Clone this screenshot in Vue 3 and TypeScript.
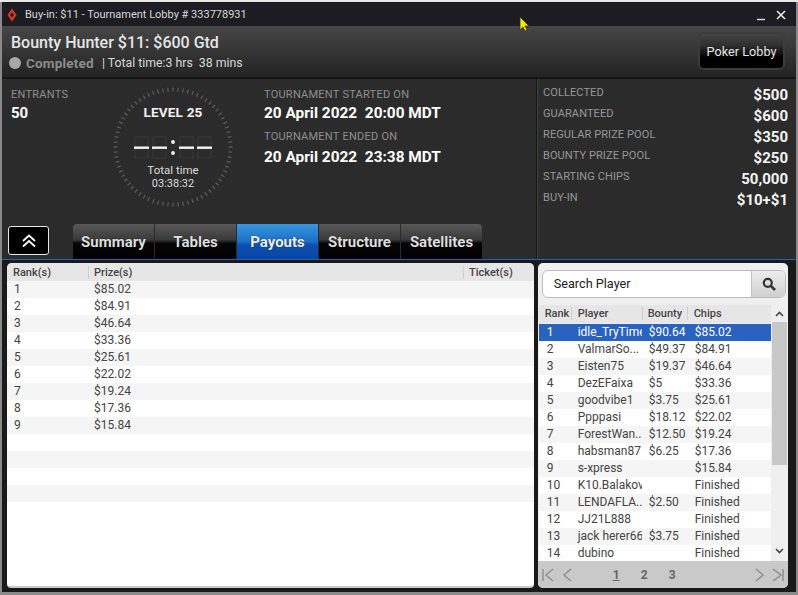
<script setup lang="ts">
const ticks = Array.from({ length: 72 }, (_, i) => {
  const a = (i * 5 * Math.PI) / 180
  const s = Math.sin(a), c = Math.cos(a)
  return { x1: 61 + 55.5 * s, y1: 61 - 55.5 * c, x2: 61 + 59.5 * s, y2: 61 - 59.5 * c }
})
const stats = [
  ['COLLECTED', '$500'], ['GUARANTEED', '$600'], ['REGULAR PRIZE POOL', '$350'],
  ['BOUNTY PRIZE POOL', '$250'], ['STARTING CHIPS', '50,000'], ['BUY-IN', '$10+$1'],
]
const tabs = ['Summary', 'Tables', 'Payouts', 'Structure', 'Satellites']
const prizes = ['$85.02', '$84.91', '$46.64', '$33.36', '$25.61', '$22.02', '$19.24', '$17.36', '$15.84', '', '', '', '']
const players = [
  ['1', 'idle_TryTime', '$90.64', '$85.02'], ['2', 'ValmarSo...', '$49.37', '$84.91'],
  ['3', 'Eisten75', '$19.37', '$46.64'], ['4', 'DezEFaixa', '$5', '$33.36'],
  ['5', 'goodvibe1', '$3.75', '$25.61'], ['6', 'Ppppasi', '$18.12', '$22.02'],
  ['7', 'ForestWan...', '$12.50', '$19.24'], ['8', 'habsman87', '$6.25', '$17.36'],
  ['9', 's-xpress', '', '$15.84'], ['10', 'K10.Balakov', '', 'Finished'],
  ['11', 'LENDAFLA...', '$2.50', 'Finished'], ['12', 'JJ21L888', '', 'Finished'],
  ['13', 'jack herer66', '$3.75', 'Finished'], ['14', 'dubino', '', 'Finished'],
]
// Seven-segment cell outlines for the unlit digits of the clock
const digitX = [0, 18, 45, 63]
</script>

<template>
  <div class="window">
    <div class="titlebar">
      <svg class="logo" width="10" height="14" viewBox="0 0 10 14">
        <path d="M5 0.5 L9.5 7 L5 13.5 L0.5 7 Z" fill="#d8391f" />
        <path d="M5 4.5 L7 7 L5 9.5 L3 7 Z" fill="#1c1c22" />
      </svg>
      <span class="title-text">Buy-in: $11 - Tournament Lobby # 333778931</span>
      <span class="spacer"></span>
      <svg class="winctl" width="36" height="12" viewBox="0 0 36 12">
        <path d="M0 10.5 H8" stroke="#ddd" stroke-width="1.4" />
        <path d="M20 2 L28 10 M28 2 L20 10" stroke="#e8e8e8" stroke-width="1.6" />
      </svg>
    </div>

    <div class="header">
      <div class="head-info">
        <div class="tname">Bounty Hunter $11: $600 Gtd</div>
        <div class="status">
          <span class="dot"></span>
          <span class="completed">Completed</span>
          <span class="total">| Total time:3 hrs&nbsp; 38 mins</span>
        </div>
      </div>
      <div class="lobby-wrap"><div class="lobby">Poker Lobby</div></div>
    </div>

    <div class="main">
      <div class="main-left">
        <div class="info-row">
          <div class="entrants">
            <div class="label">ENTRANTS</div>
            <div class="value">50</div>
          </div>
          <div class="clock">
            <svg class="ring" width="122" height="122" viewBox="0 0 122 122">
              <line v-for="(t, i) in ticks" :key="i" :x1="t.x1" :y1="t.y1" :x2="t.x2" :y2="t.y2" stroke="#5a5a5a" stroke-width="1.3" />
            </svg>
            <div class="level">LEVEL 25</div>
            <svg class="digits" width="78" height="24" viewBox="0 0 78 24">
              <g v-for="x in digitX" :key="x" fill="none" stroke="#363636" stroke-width="1.4">
                <rect :x="x + 1" y="1" width="13" height="10.5" />
                <rect :x="x + 1" y="11.5" width="13" height="10.5" />
              </g>
              <rect v-for="x in digitX" :key="'d' + x" :x="x" y="10.5" width="15" height="2.4" fill="#f2f2f2" />
              <circle cx="39" cy="6" r="1.9" fill="#f2f2f2" />
              <circle cx="39" cy="17" r="1.9" fill="#f2f2f2" />
            </svg>
            <div class="ttime">Total time</div>
            <div class="ttime">03:38:32</div>
          </div>
          <div class="dates">
            <div class="label">TOURNAMENT STARTED ON</div>
            <div class="value date">20 April 2022&nbsp; 20:00 MDT</div>
            <div class="label second">TOURNAMENT ENDED ON</div>
            <div class="value date last">20 April 2022&nbsp; 23:38 MDT</div>
          </div>
        </div>
        <div class="tab-row">
          <div class="collapse">
            <svg width="14" height="14" viewBox="0 0 14 14" fill="none" stroke="#fff" stroke-width="1.7">
              <path d="M1 7 L7 1.5 L13 7" />
              <path d="M1 12.5 L7 7 L13 12.5" />
            </svg>
          </div>
          <div class="tabs">
            <div v-for="t in tabs" :key="t" class="tab" :class="{ active: t === 'Payouts' }">{{ t }}</div>
          </div>
        </div>
      </div>
      <div class="main-right">
        <div v-for="s in stats" :key="s[0]" class="stat">
          <span class="stat-label">{{ s[0] }}</span>
          <span class="stat-value">{{ s[1] }}</span>
        </div>
      </div>
    </div>

    <div class="bottom">
      <div class="payouts">
        <div class="p-head">
          <div class="pc1">Rank(s)</div>
          <div class="pc2">Prize(s)</div>
          <div class="pc3">Ticket(s)</div>
        </div>
        <div v-for="(p, i) in prizes" :key="i" class="p-row" :class="{ alt: i % 2 === 0 }">
          <div class="pc1 cell">{{ p ? i + 1 : '' }}</div>
          <div class="pc2 cell">{{ p }}</div>
        </div>
      </div>

      <div class="side">
        <div class="search">
          <div class="search-input">Search Player</div>
          <div class="search-btn">
            <svg width="14" height="14" viewBox="0 0 14 14" fill="none" stroke="#333" stroke-width="2.2">
              <circle cx="5.8" cy="5.8" r="4" />
              <path d="M8.8 8.8 L13 13" stroke-width="2.6" />
            </svg>
          </div>
        </div>
        <div class="list">
          <div class="list-main">
            <div class="l-head">
              <div class="c1">Rank</div>
              <div class="c2">Player</div>
              <div class="c3">Bounty</div>
              <div class="c4">Chips</div>
            </div>
            <div v-for="(r, i) in players" :key="r[0]" class="l-row" :class="{ sel: i === 0, alt: i > 0 && i % 2 === 0 }">
              <div class="c1 lc">{{ r[0] }}</div>
              <div class="c2 lc">{{ r[1] }}</div>
              <div class="c3 lc">{{ r[2] }}</div>
              <div class="c4 lc">{{ r[3] }}</div>
            </div>
          </div>
          <div class="scroll">
            <svg class="arrow" width="9" height="6" viewBox="0 0 9 6" fill="none" stroke="#444" stroke-width="1.6"><path d="M1 5 L4.5 1.5 L8 5" /></svg>
            <div class="thumb"></div>
            <svg class="arrow" width="9" height="6" viewBox="0 0 9 6" fill="none" stroke="#444" stroke-width="1.6"><path d="M1 1 L4.5 4.5 L8 1" /></svg>
          </div>
        </div>
        <div class="pager">
          <svg width="36" height="14" viewBox="0 0 36 14" fill="none" stroke="#8f8f8f" stroke-width="1.5">
            <path d="M1 1 V13 M11 1 L4 7 L11 13 M29 1 L22 7 L29 13" />
          </svg>
          <div class="pages">
            <span class="pg cur">1</span><span class="pg">2</span><span class="pg">3</span>
          </div>
          <svg width="36" height="14" viewBox="0 0 36 14" fill="none" stroke="#8f8f8f" stroke-width="1.5">
            <path d="M7 1 L14 7 L7 13 M24 1 L32 7 L24 13 M34 1 V13" />
          </svg>
        </div>
      </div>
    </div>

    <svg class="cursor" width="11" height="16" viewBox="0 0 11 16">
      <path d="M1 1 V14 L4 11 L6 15 L8 14 L6 10 L10 10 Z" fill="#f4e800" stroke="#333" stroke-width="0.8" />
    </svg>
  </div>
</template>

<style>
html, body { margin: 0; background: #8a8a8a; }
</style>

<style scoped>
.window {
  position: relative; width: 798px; height: 595px; box-sizing: border-box;
  padding: 3px 2px 5px 2px; background: #1a1a1a;
  overflow: hidden;
  font-family: Roboto, "Liberation Sans", sans-serif;
  box-shadow: inset 0 2px 0 #e8e8e8, inset 2px 0 0 #8a8a8a, inset -2px 0 0 #8a8a8a, inset 0 -3px 0 #8a8a8a;
}
.titlebar {
  height: 23px; background: #1c1c22; display: flex; align-items: center; padding: 0 3px 0 5px;
  color: #d8d8d8; font-size: 11px;
}
.logo { margin-right: 8px; }
.spacer { flex: 1; }
.header {
  height: 51px; box-sizing: border-box; display: flex; justify-content: space-between;
  background: linear-gradient(#464646, #232323); padding: 8px 11px 0 9px;
}
.tname { color: #e6e6e6; font-size: 16px; font-weight: 500; line-height: 18px; }
.status { display: flex; align-items: center; margin-top: 3px; height: 16px; font-size: 12.3px; color: #d8d8d8; }
.dot { width: 12px; height: 12px; border-radius: 50%; background: #a8a8a8; margin: 0 5px 0 -2px; }
.completed { font-weight: 700; color: #8c8c8c; font-size: 13.5px; margin-right: 8px; letter-spacing: 0.2px; }
.lobby-wrap { border: 2px solid #3c3c3c; border-radius: 6px; margin-top: -2px; height: 38px; box-sizing: border-box; }
.lobby {
  width: 83px; height: 34px; display: flex; align-items: center; justify-content: center;
  border-radius: 4px; background: linear-gradient(#444 0%, #2e2e2e 35%, #000 70%, #000);
  color: #e4e4e4; font-size: 12.7px;
}
.main { height: 183px; display: flex; background: #2b2b2b; border-top: 2px solid #161616; box-sizing: border-box; border-bottom: 1px solid #1d66b8; }
.main-left { width: 534px; display: flex; flex-direction: column; justify-content: space-between; border-right: 1px solid #151515; box-shadow: 1px 0 0 #3f3f3f; }
.info-row { display: flex; padding-top: 9px; }
.entrants { width: 102px; padding-left: 9px; box-sizing: border-box; }
.label { font-size: 11px; line-height: 14px; color: #8f8f8f; letter-spacing: 0.25px; }
.value { color: #fff; font-weight: 700; font-size: 15px; line-height: 18px; margin-top: 2px; }
.clock {
  position: relative; width: 122px; height: 122px; margin: -2px 0 0 8px;
  display: flex; flex-direction: column; align-items: center;
}
.ring { position: absolute; left: 0; top: 0; }
.level { color: #f2f2f2; font-size: 13.5px; font-weight: 700; line-height: 14px; margin-top: 19px; letter-spacing: 0.2px; }
.digits { margin-top: 17px; }
.ttime { color: #dcdcdc; font-size: 11px; line-height: 13px; }
.digits + .ttime { margin-top: 4px; font-size: 11.5px; }
.dates { margin-left: 30px; }
.date { font-size: 15.4px; }
.second { margin-top: 8px; }
.date.last { margin-top: 4px; }
.tab-row { display: flex; align-items: flex-end; height: 35px; }
.collapse {
  width: 41px; height: 29px; box-sizing: border-box; margin: 0 0 4px 6px; background: #000;
  border: 1px solid #e8e8e8; border-radius: 3px; display: flex; align-items: center; justify-content: center;
}
.tabs { display: flex; margin-left: 24px; gap: 1px; }
.tab {
  width: 81px; height: 35px; display: flex; align-items: center; justify-content: center;
  color: #dedede; font-size: 15px; font-weight: 700; box-sizing: border-box;
  background: linear-gradient(#585858 0%, #3a3a3a 45%, #060606 55%, #000 100%);
  text-shadow: 0 0 1px #000;
}
.tab:first-child { border-top-left-radius: 4px; }
.tab:last-child { border-top-right-radius: 4px; }
.tab.active { background: linear-gradient(#3a97e0 0%, #1a6fc4 50%, #0a4fb0 60%, #0a45a6 100%); color: #f0f0f0; }
.main-right { flex: 1; padding: 5px 8px 0 6px; }
.stat { display: flex; justify-content: space-between; height: 21px; }
.stat-label { font-size: 11px; color: #979797; line-height: 17px; letter-spacing: 0.1px; }
.stat-value { font-size: 15px; font-weight: 700; color: #f4f4f4; line-height: 23px; }
.bottom { height: 330px; display: flex; box-sizing: border-box; padding: 3px 8px 2px 5px; gap: 4px; }
.payouts { width: 528px; background: #fff; border-radius: 5px 5px 4px 4px; border-bottom: 2px solid #c9c9c9; box-sizing: border-box; overflow: hidden; }
.p-head { display: flex; height: 18px; background: #e6e6e6; font-size: 11px; font-weight: 500; color: #444; align-items: center; }
.pc1 { width: 81px; padding-left: 6px; box-sizing: border-box; }
.pc2 { width: 375px; padding-left: 5px; box-sizing: border-box; border-left: 1px solid #cfcfcf; }
.pc3 { flex: 1; padding-left: 5px; border-left: 1px solid #cfcfcf; }
.p-row { display: flex; height: 17px; box-sizing: border-box; padding-bottom: 2px; align-items: center; font-size: 12px; color: #444; }
.p-row.alt { background: #f5f5f5; }
.cell { border-left: 0; }
.cell.pc1 { padding-left: 7px; }
.cell.pc2 { padding-left: 6px; }
.side { width: 251px; background: #efefef; border-radius: 5px; display: flex; flex-direction: column; overflow: hidden; }
.search {
  display: flex; height: 28px; margin: 7px 2px 0 4px; box-sizing: border-box; border: 1px solid #bdbdbd; border-radius: 6px; overflow: hidden; background: #fff;
  flex: none;
}
.search-input { flex: 1; padding-left: 11px; color: #222; font-size: 12.7px; line-height: 26px; }
.search-btn { width: 33px; display: flex; align-items: center; justify-content: center; background: linear-gradient(#ececec, #cfcfcf); border-left: 1px solid #c4c4c4; }
.list { display: flex; margin: 7px 0 0 1px; flex: 1; min-height: 0; overflow: hidden; }
.list-main { width: 232px; }
.l-head { display: flex; height: 18px; box-sizing: border-box; padding-bottom: 2px; background: #e6e6e6; font-size: 11px; font-weight: 500; color: #444; align-items: center; margin-bottom: 1px; }
.l-head .c2, .l-head .c3, .l-head .c4 { border-left: 1px solid #cfcfcf; padding-left: 6px; }
.l-head .c3 { padding-left: 5px; }
.l-head .c1 { padding-left: 6px; }
.c1 { width: 32px; box-sizing: border-box; }
.c2 { width: 71px; box-sizing: border-box; }
.c3 { width: 45px; box-sizing: border-box; }
.c4 { flex: 1; box-sizing: border-box; }
.l-row { display: flex; height: 17px; box-sizing: border-box; padding-bottom: 2px; align-items: center; font-size: 12px; color: #444; background: #fff; }
.l-row.alt { background: #f5f5f5; }
.l-row.sel { background: #2a62c0; color: #fff; }
.lc { white-space: nowrap; overflow: hidden; padding-left: 8px; }
.lc.c2 { padding-left: 7px; }
.lc.c3 { padding-left: 7px; }
.scroll { width: 15px; margin-left: 1px; display: flex; flex-direction: column; align-items: center; background: #efefef; }
.arrow { flex: none; margin: 6px 0; }
.thumb { width: 15px; height: 143px; background: #c8c8c8; margin-top: -1px; }
.scroll .arrow:last-child { margin-top: auto; margin-bottom: 7px; }
.pager {
  height: 27px; background: #c9c9c9; display: flex; align-items: center; padding: 0 3px 0 4px; box-sizing: border-box; flex: none;
}
.pages { display: flex; gap: 21px; margin: 0 auto 0 35px; font-size: 12px; font-weight: 700; color: #666; }
.pg { width: 7px; text-align: center; }
.pg.cur { text-decoration: underline; }
.cursor { position: absolute; left: 519px; top: 16px; }
</style>
